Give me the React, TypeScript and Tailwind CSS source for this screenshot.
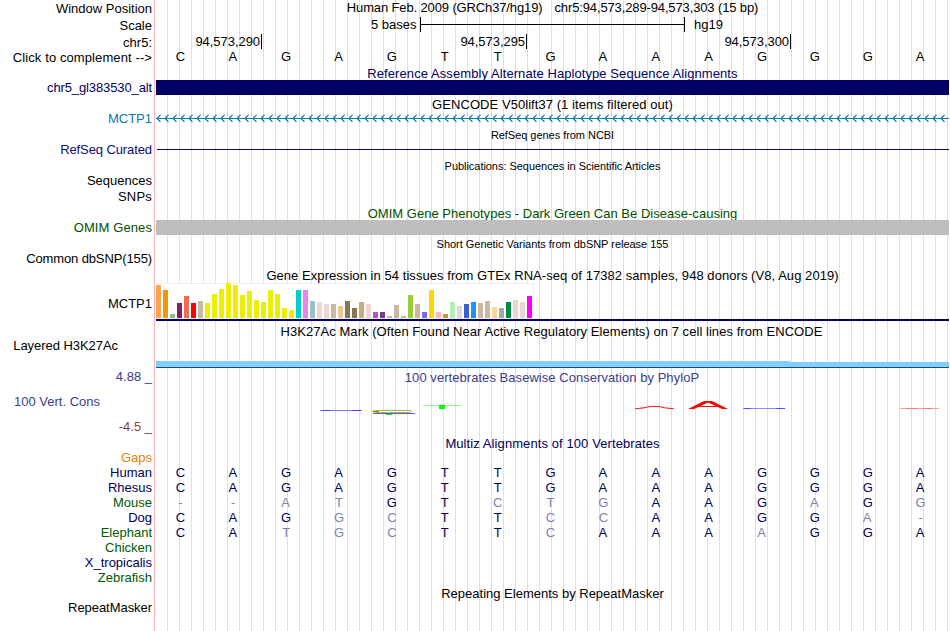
import clsx from "clsx"

const labels = [
    { text: "Window Position", style: "mt-px" },
    { text: "Scale", style: "mt-0.5" },
    { text: "chr5:", style: "mt-0.5" },
    { text: "Click to complement -->", style: "tracking-[0.1px]" },
    { text: "chr5_gl383530_alt", style: "mt-[15px] tracking-[-0.12px] text-[#000064]" },
    { text: "MCTP1", style: "mt-4 text-[#0c78b4]" },
    { text: "RefSeq Curated", style: "mt-4 tracking-[-0.1px] text-[#0c0c78]" },
    { text: "Sequences", style: "mt-4" },
    { text: "SNPs", style: "mt-px tracking-[0.2px]" },
    { text: "OMIM Genes", style: "mt-4 tracking-[0.1px] text-[#005000]" },
    { text: "Common dbSNP(155)", style: "mt-4 tracking-[-0.12px]" },
    { text: "MCTP1", style: "mt-[30px]" },
    { text: "Layered H3K27Ac", style: "mt-[27px] pr-[34px] tracking-[-0.05px]" },
    { text: "4.88 _", style: "mt-4 text-[#3c3c8c]" },
    { text: "100 Vert. Cons", style: "mt-2.5 pr-[52px] text-[#3c3c8c]" },
    { text: "-4.5 _", style: "mt-2.5 text-[#8c3c3c]" },
    { text: "Gaps", style: "mt-4 text-[#e68200]" },
    { text: "Human", style: "text-[#00005a]" },
    { text: "Rhesus", style: "text-[#00005a]" },
    { text: "Mouse", style: "text-[#005a00]" },
    { text: "Dog", style: "text-[#00005a]" },
    { text: "Elephant", style: "text-[#005a00]" },
    { text: "Chicken", style: "text-[#005a00]" },
    { text: "X_tropicalis", style: "text-[#00005a]" },
    { text: "Zebrafish", style: "text-[#005a00]" },
    { text: "RepeatMasker", style: "mt-[15px] tracking-[-0.05px]" },
]

// lower case = differs from the reference base
const alignments = [
    "CAGAGTTGAAAGGGA",
    "CAGAGTTGAAAGGGA",
    "--atGTctgAAGaGg",
    "CAGgcTTccAAGGa-",
    "CAtgcTTcAAAaGGA",
]

const tissues: [number, string][] = [
    [33, "#ffa54f"], [28, "#ee9a00"], [4, "#8fbc8f"], [15, "#8b1c62"], [22, "#ee6a50"], [15, "#ff0000"],
    [17, "#cdb79e"], [15, "#eeee00"], [24, "#eeee00"], [29, "#eeee00"], [35, "#eeee00"], [33, "#eeee00"],
    [23, "#eeee00"], [27, "#eeee00"], [18, "#eeee00"], [16, "#eeee00"], [28, "#eeee00"], [24, "#eeee00"],
    [10, "#eeee00"], [8, "#eeee00"], [28, "#00cdcd"], [28, "#ee82ee"], [17, "#9ac0cd"], [16, "#eed5d2"],
    [14, "#eed5d2"], [14, "#cdb79e"], [12, "#eec591"], [17, "#8b7355"], [10, "#8b7355"], [16, "#cdaa7d"],
    [14, "#eed5d2"], [6, "#b452cd"], [6, "#7a378b"], [2, "#cdb79e"], [13, "#cdb79e"], [2, "#cdb79e"],
    [23, "#9acd32"], [14, "#cdb79e"], [6, "#7a67ee"], [28, "#ffd700"], [6, "#ffb6c1"], [4, "#cd9b1d"],
    [16, "#b4eeb4"], [12, "#d9d9d9"], [14, "#3a5fcd"], [16, "#1e90ff"], [15, "#cdb79e"], [17, "#cdb79e"],
    [11, "#ffd39b"], [10, "#a6a6a6"], [16, "#008b45"], [18, "#eed5d2"], [16, "#eed5d2"], [22, "#ff00ff"],
]

function Title({ text, style }: { text: string; style?: string }) {
    return <div className={clsx("h-[15px] w-full text-center whitespace-pre", style)}>{text}</div>
}

function Bases({ seq, style }: { seq: string; style?: string }) {
    return (
        <div className={clsx("-ml-0.5 grid h-[15px] w-[793px] grid-cols-15 text-center", style)}>
            {seq.split("").map((base, i) => (
                <span
                    key={i}
                    className={clsx(/[a-z-]/.test(base) && "text-[#8080ac]", base.toUpperCase() === "A" && "pr-px")}
                >
                    {base.toUpperCase()}
                </span>
            ))}
        </div>
    )
}

function Position({ text, style }: { text: string; style: string }) {
    return (
        <div className={clsx("flex h-[15px] items-start justify-end border-r border-black pr-px tracking-[-0.05px]", style)}>
            {text}
        </div>
    )
}

function GeneArrows() {
    return (
        <svg className="-mt-px block" width="793" height="9" fill="none" stroke="#0c78b4">
            <path d="M0 4.5H793" />
            {Array.from({ length: 99 }, (_, i) => (
                <path key={i} d={`M${i * 8 + 4.5} 1l-3.5 3.500l3.5 3.500`} strokeWidth="1.1" />
            ))}
        </svg>
    )
}

function Conservation() {
    return (
        <svg className="block" width="793" height="18" viewBox="156 400 793 18">
            <path d="M320 410.5H362" stroke="#8080ff" />
            <path d="M322 410.5h8M352 410.5h9" stroke="#4646ff" />
            <path d="M372 411.5l4 -1H411M372 411.5l4 1H409l3 -1" fill="none" stroke="#b4b43c" />
            <path d="M373 411.5h6" stroke="#8c8c14" />
            <path d="M373 413.5H415" stroke="#5a5aff" />
            <path d="M386 414h6v1h-6z" fill="#00ff00" />
            <path d="M423 405.5H461" stroke="#96f096" />
            <path d="M439 405h6v4h-6z" fill="#00ff00" />
            <path d="M635 408.7q9 -.5 15 -2.200h9q6 1.700 15 2.200" fill="none" stroke="#ff1e1e" strokeWidth="1.1" />
            <path d="M688 409L704 401h8L728 409h-6L708 402.500L694 409z" fill="#ff0000" />
            <path d="M698 406.500h20" stroke="#ff0000" />
            <path d="M743 408.500h42" stroke="#8c8cff" />
            <path d="M744 408.500h7M776 408.500h9" stroke="#5050ff" />
            <path d="M900 408.500h39" stroke="#ffa0a0" />
            <path d="M906 408.500h12M924 408.500h8" stroke="#ff7878" />
        </svg>
    )
}

export default function App() {
    return (
        <div className="flex h-[631px] w-[950px] overflow-hidden bg-white font-['Liberation_Sans',Arial,sans-serif] text-[13px] leading-[15px] text-black">
            <div className="flex w-[154px] shrink-0 flex-col pr-0.5 text-right whitespace-nowrap">
                {labels.map((label, i) => (
                    <div key={i} className={clsx("h-[15px]", label.style)}>{label.text}</div>
                ))}
            </div>
            <div className="mr-px w-px shrink-0 bg-[#ffb4b4]" />
            <div className="flex w-[793px] flex-col bg-[repeating-linear-gradient(90deg,transparent_0_11px,#dcdcf8_11px_12px)]">
                <div className="flex h-[15px] justify-center gap-3 tracking-[-0.13px]">
                    <span>Human Feb. 2009 (GRCh37/hg19)</span>
                    <span>chr5:94,573,289-94,573,303 (15 bp)</span>
                </div>
                <div className="mt-0.5 flex h-[15px] items-center pl-[215px]">
                    <span className="w-[49px]">5 bases</span>
                    <div className="flex h-[15px] w-[265px] items-center border-x border-black">
                        <div className="h-px w-full bg-black" />
                    </div>
                    <span className="ml-[9px]">hg19</span>
                </div>
                <div className="mt-[2px] flex h-[15px]">
                    <Position text="94,573,290" style="w-[106px]" />
                    <Position text="94,573,295" style="w-[265px]" />
                    <Position text="94,573,300" style="w-[264px]" />
                </div>
                <Bases seq="CAGAGTTGAAAGGGA" />
                <Title text="Reference Assembly Alternate Haplotype Sequence Alignments" style="mt-[2px] tracking-[0.08px] text-[#000064]" />
                <div className="-mt-px h-[15px] shrink-0 bg-[#000064]" />
                <Title text="GENCODE V50lift37 (1 items filtered out)" style="mt-[2px] tracking-[0.06px]" />
                <div className="mt-[3px]"><GeneArrows /></div>
                <Title text="RefSeq genes from NCBI" style="mt-[5px] text-[11px] tracking-[-0.04px]" />
                <div className="mt-[6px] ml-px h-px shrink-0 bg-[#0c0c50]" />
                <Title text="Publications: Sequences in Scientific Articles" style="mt-[9px] text-[11px] tracking-[-0.04px]" />
                <Title text="OMIM Gene Phenotypes - Dark Green Can Be Disease-causing" style="mt-[32px] tracking-[0.02px] text-[#005000]" />
                <div className="-mt-px h-[15px] shrink-0 bg-[#bebebe]" />
                <Title text="Short Genetic Variants from dbSNP release 155" style="mt-[2px] text-[11px] tracking-[-0.03px]" />
                <Title text="Gene Expression in 54 tissues from GTEx RNA-seq of 17382 samples, 948 donors (V8, Aug 2019)" style="mt-4 tracking-[0.055px]" />
                <div className="flex h-9 w-[378px] shrink-0 items-end gap-0.5 border-y border-r border-[#eeeeee] bg-white">
                    {tissues.map(([height, color], i) => (
                        <div key={i} className="w-[5px] shrink-0" style={{ height, backgroundColor: color }} />
                    ))}
                </div>
                <div className="h-0.5 shrink-0 bg-[#00006e]" />
                <Title text="H3K27Ac Mark (Often Found Near Active Regulatory Elements) on 7 cell lines from ENCODE" style="mt-[3px] pr-0.5 tracking-[0.05px]" />
                <div className="mt-[22px] flex h-[7px] shrink-0 items-end border-b border-[#1e4b6e]">
                    <div className="h-1.5 w-[634px] bg-[#80d0ff]" />
                    <div className="h-[5px] w-[159px] bg-[#80d0ff]" />
                </div>
                <Title text="100 vertebrates Basewise Conservation by PhyloP" style="mt-[2px] pr-px tracking-[0.05px] text-[#3c3c8c]" />
                <div className="mt-[15px]"><Conservation /></div>
                <Title text="Multiz Alignments of 100 Vertebrates" style="mt-[18px] tracking-[0.09px] text-[#00005a]" />
                <div className="mt-[14px] text-[#00005a]">
                    {alignments.map((seq, i) => <Bases key={i} seq={seq} />)}
                </div>
                <Title text="Repeating Elements by RepeatMasker" style="mt-[46px]" />
            </div>
        </div>
    )
}
